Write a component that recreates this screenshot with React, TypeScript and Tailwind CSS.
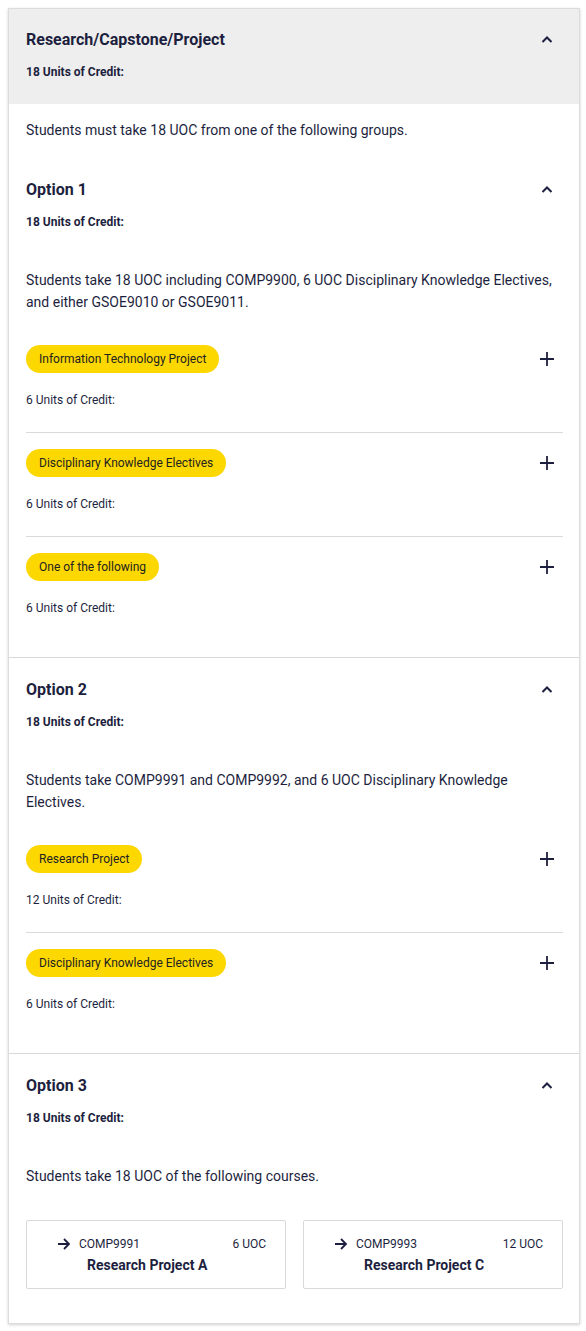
const ink = 'text-[#1d1f3e]'

interface Item {
  tag: string
  credits: number
}

interface Course {
  code: string
  uoc: number
  title: string
}

function ChevronUp() {
  return (
    <svg width="14" height="14" viewBox="0 0 14 14" className="shrink-0">
      <path d="M2.5 9 L7 4.5 L11.5 9" fill="none" stroke="#1d1f3e" strokeWidth="2" />
    </svg>
  )
}

function Plus() {
  return (
    <svg width="16" height="16" viewBox="0 0 16 16" className="shrink-0">
      <path d="M8 1v14M1 8h14" fill="none" stroke="#1d1f3e" strokeWidth="1.8" />
    </svg>
  )
}

function Arrow() {
  return (
    <svg width="14" height="14" viewBox="0 0 14 14" className="shrink-0 mt-[1px]">
      <path d="M1 7h11M7 2l5 5-5 5" fill="none" stroke="#1d1f3e" strokeWidth="1.8" />
    </svg>
  )
}

function TitleRow({ title }: { title: string }) {
  return (
    <div className="flex h-6 items-center justify-between pr-[9px]">
      <h3 className={`text-[16px] font-bold ${ink}`}>{title}</h3>
      <ChevronUp />
    </div>
  )
}

function Credits({ uoc }: { uoc: number }) {
  return <p className={`text-[12px] leading-4 font-bold ${ink}`}>{uoc} Units of Credit:</p>
}

function GroupItem({ item, last }: { item: Item; last: boolean }) {
  return (
    <div className={`pt-4 pb-6 ${last ? '' : 'border-b border-[#d9d9d9]'}`}>
      <div className="flex items-center justify-between pr-2">
        <span className="rounded-full bg-[#fdd700] px-[13px] h-7 flex items-center text-[12px] text-[#222]">
          {item.tag}
        </span>
        <Plus />
      </div>
      <p className={`mt-[19px] text-[12px] leading-4 ${ink}`}>{item.credits} Units of Credit:</p>
    </div>
  )
}

function CourseCard({ course }: { course: Course }) {
  return (
    <div className="border border-[#d9d9d9] rounded-[2px] pt-[15px] pb-[13px] pl-[30px] pr-[19px]">
      <div className="flex items-start gap-[8px]">
        <Arrow />
        <div className="flex-1">
          <div className={`flex items-center justify-between text-[12px] leading-4 ${ink}`}>
            <span>{course.code}</span>
            <span>{course.uoc} UOC</span>
          </div>
          <p className={`mt-[3px] pl-2 text-[14px] leading-5 font-bold ${ink}`}>{course.title}</p>
        </div>
      </div>
    </div>
  )
}

function Option({
  title,
  text,
  items,
  courses,
  first,
}: {
  title: string
  text: string
  items?: Item[]
  courses?: Course[]
  first?: boolean
}) {
  return (
    <section
      className={`pl-[17px] pr-4 ${first ? 'pt-[38px]' : 'pt-5 border-t border-[#d9d9d9]'} ${
        courses ? 'pb-[18px]' : 'pb-[17px]'
      }`}
    >
      <TitleRow title={title} />
      <div className="mt-3">
        <Credits uoc={18} />
      </div>
      <p className={`mt-[39px] text-[14px] leading-[22px] ${ink}`}>{text}</p>
      {items && (
        <div className="mt-4">
          {items.map((it, i) => (
            <GroupItem key={it.tag + i} item={it} last={i === items.length - 1} />
          ))}
        </div>
      )}
      {courses && (
        <div className="mt-[33px] mb-4 grid grid-cols-2 gap-[17px]">
          {courses.map((c) => (
            <CourseCard key={c.code} course={c} />
          ))}
        </div>
      )}
    </section>
  )
}

export default function App() {
  return (
    <div className="pl-2 pr-[6px] py-2 bg-white min-h-screen" style={{ fontFamily: 'Roboto, "Liberation Sans", sans-serif' }}>
      <div className="border border-[#dcdcdc] shadow-[0_1px_3px_rgba(0,0,0,0.18)] bg-white">
        <div className="bg-[#eeeeee] pl-[17px] pr-4 pt-[19px] pb-[24px]">
          <TitleRow title="Research/Capstone/Project" />
          <div className="mt-[12px]">
            <Credits uoc={18} />
          </div>
        </div>

        <p className={`pl-[17px] pr-4 pt-4 text-[14px] leading-5 ${ink}`}>
          Students must take 18 UOC from one of the following groups.
        </p>

        <Option
          first
          title="Option 1"
          text="Students take 18 UOC including COMP9900, 6 UOC Disciplinary Knowledge Electives, and either GSOE9010 or GSOE9011."
          items={[
            { tag: 'Information Technology Project', credits: 6 },
            { tag: 'Disciplinary Knowledge Electives', credits: 6 },
            { tag: 'One of the following', credits: 6 },
          ]}
        />
        <Option
          title="Option 2"
          text="Students take COMP9991 and COMP9992, and 6 UOC Disciplinary Knowledge Electives."
          items={[
            { tag: 'Research Project', credits: 12 },
            { tag: 'Disciplinary Knowledge Electives', credits: 6 },
          ]}
        />
        <Option
          title="Option 3"
          text="Students take 18 UOC of the following courses."
          courses={[
            { code: 'COMP9991', uoc: 6, title: 'Research Project A' },
            { code: 'COMP9993', uoc: 12, title: 'Research Project C' },
          ]}
        />
      </div>
    </div>
  )
}
